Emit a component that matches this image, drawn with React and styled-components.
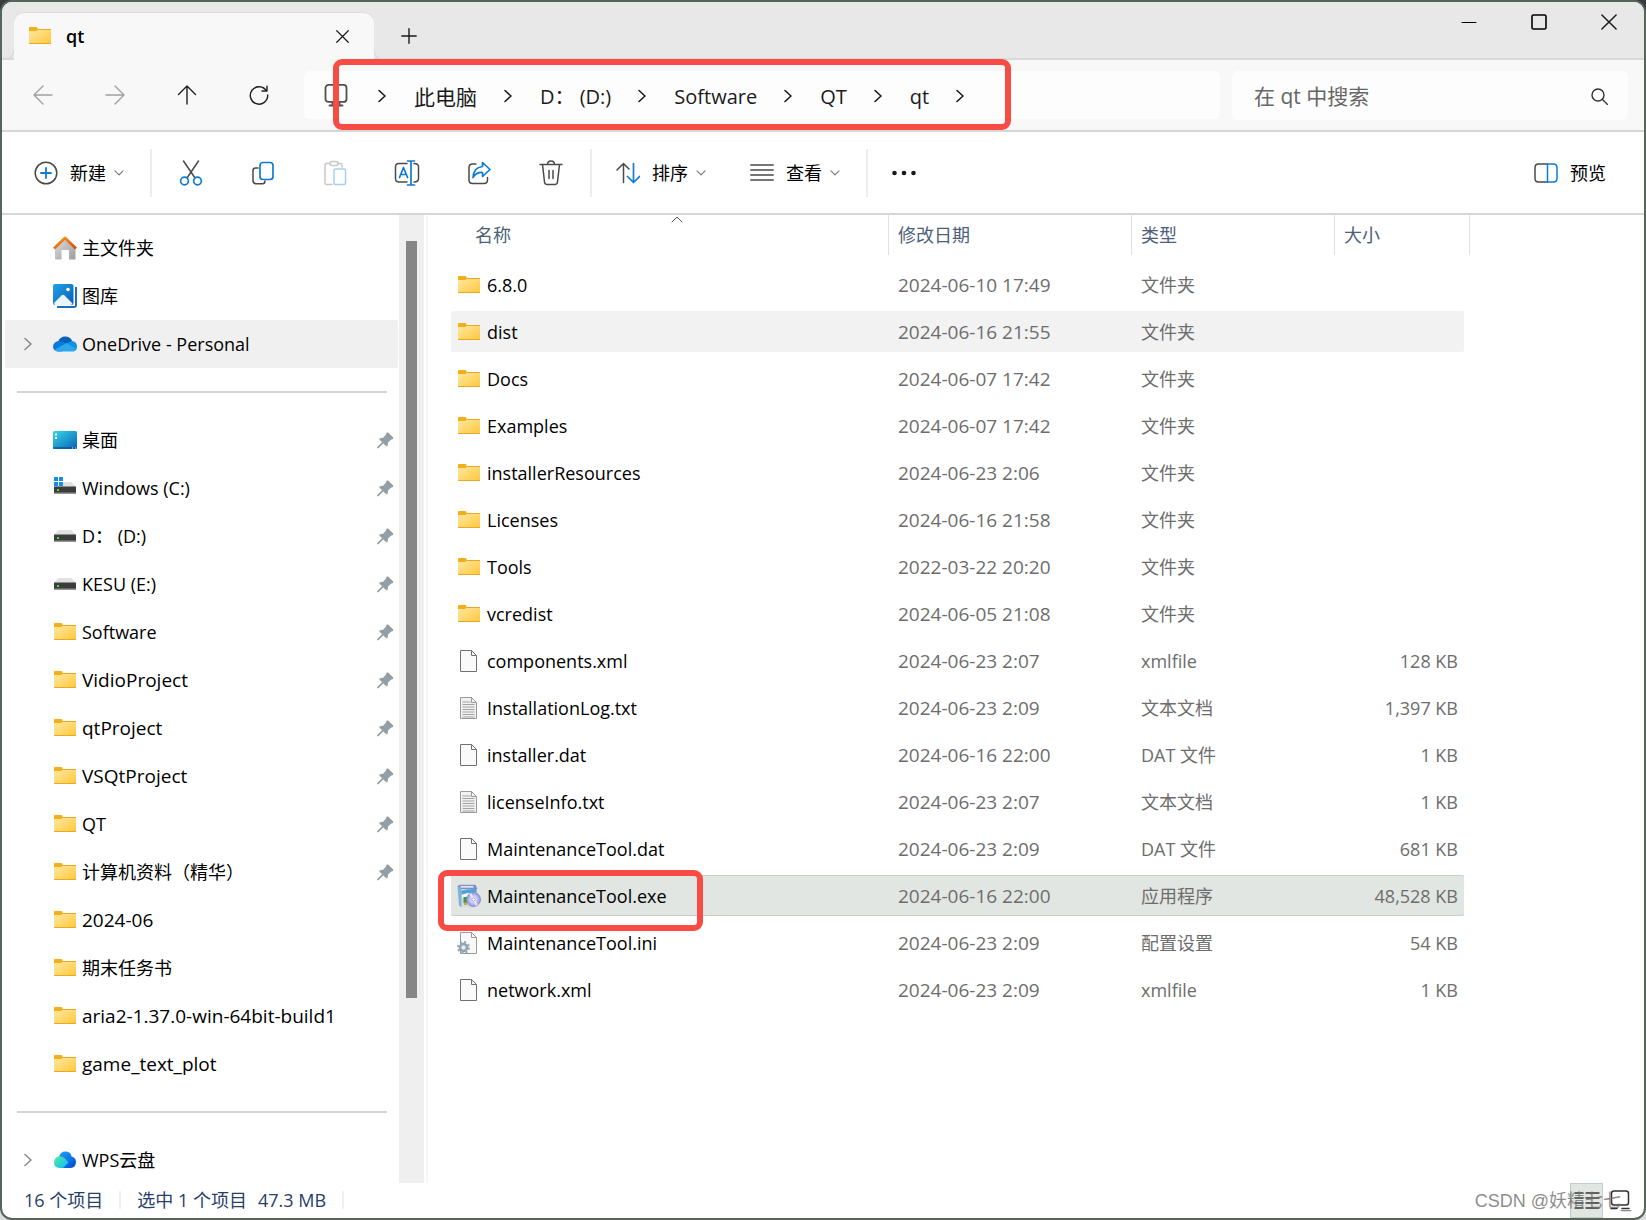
import React from 'react';
import styled, { createGlobalStyle, css } from 'styled-components';

const FONT = '"Open Sans", "Noto Sans CJK SC", sans-serif';
const BLUE = '#0f7bd4';
const INK = '#4a4a4a';

const GlobalStyle = createGlobalStyle`
  * { box-sizing: border-box; }
  html, body { margin: 0; height: 100%; }
  body {
    background: linear-gradient(#3b3b3f 0, #3b3b3f 12px, #dcdcdc 12px);
    font-family: ${FONT};
    font-weight: 400;
    color: #000;
  }
  button, input { font: inherit; color: inherit; }
  svg { display: block; flex: none; }
`;

const Window = styled.div`
  display: flex;
  flex-direction: column;
  height: 100vh;
  overflow: hidden;
  border: 2px solid #56655b;
  border-radius: 12px;
  background: #fff;
  font-size: 18px;
  line-height: 24px;
`;

const PlainButton = styled.button`
  display: flex;
  align-items: center;
  justify-content: center;
  padding: 0;
  border: 0;
  background: transparent;
`;

/* ---------- title bar ---------- */

const TitleBar = styled.header`
  display: flex;
  align-items: flex-end;
  height: 58px;
  flex: none;
  padding-left: 12px;
  background: #e8e8e8;
  box-shadow: inset 0 -2px 0 #d9d9d9;
`;

const Tab = styled.div`
  position: relative;
  display: flex;
  align-items: center;
  width: 360px;
  height: 47px;
  padding: 0 18px 1px 14px;
  border-radius: 10px 10px 0 0;
  background: #f8f8f8;
  box-shadow: 0 -1px 0 #dedede;
  font-weight: 600;
  &::before, &::after {
    content: '';
    position: absolute;
    bottom: 0;
    width: 8px;
    height: 8px;
    border-bottom: 2px solid #d9d9d9;
  }
  &::before { right: 100%; border-right: 1px solid #d9d9d9; border-bottom-right-radius: 8px; }
  &::after { left: 100%; border-left: 1px solid #d9d9d9; border-bottom-left-radius: 8px; }
`;

const TabName = styled.span`
  flex: 1;
  padding-left: 14px;
`;

const TabAction = styled(PlainButton)`
  width: 28px;
  height: 28px;
`;

const NewTab = styled(PlainButton)`
  width: 47px;
  height: 48px;
  margin-left: 11px;
`;

const WindowControls = styled.div`
  display: flex;
  align-self: flex-start;
  margin-left: auto;
`;

const ControlButton = styled(PlainButton)`
  width: 70px;
  height: 40px;
`;

/* ---------- navigation bar ---------- */

const NavBar = styled.nav`
  display: flex;
  align-items: center;
  height: 72px;
  flex: none;
  padding: 0 16px 0 5px;
  background: #f8f8f8;
  border-bottom: 2px solid #d6d6d6;
`;

const NavButton = styled(PlainButton)`
  width: 72px;
  height: 48px;
`;

const AddressBar = styled.div`
  position: relative;
  display: flex;
  align-items: center;
  flex: 1;
  height: 48px;
  margin-left: 9px;
  padding: 2px 0 0 20px;
  border-radius: 6px;
  background: #fdfdfd;
  color: #1b1b1b;
`;

const Crumb = styled(PlainButton)`
  padding: 1px 27px 0 28px;
  font-size: ${(p) => (p.$cjk ? 21 : 20)}px;
  white-space: pre;
`;

const CrumbRoot = styled(PlainButton)`
  margin-right: 30px;
`;

const Highlight = styled.span`
  position: absolute;
  z-index: 2;
  border: 6px solid #f84b46;
  border-radius: 9px;
  pointer-events: none;
`;

const AddressHighlight = styled(Highlight)`
  top: -12px;
  left: 29px;
  width: 678px;
  height: 71px;
`;

const FileHighlight = styled(Highlight)`
  top: -5px;
  left: -13px;
  width: 265px;
  height: 61px;
`;

const SearchBox = styled.label`
  display: flex;
  align-items: center;
  width: 396px;
  height: 49px;
  margin-left: 12px;
  padding: 2px 20px 0 22px;
  border-radius: 6px;
  background: #fdfdfd;
`;

const SearchInput = styled.input`
  flex: 1;
  min-width: 0;
  padding: 0;
  border: 0;
  outline: 0;
  background: transparent;
  font-size: 21px;
  &::placeholder { color: #666; opacity: 1; }
`;

/* ---------- command bar ---------- */

const CommandBar = styled.div`
  display: flex;
  align-items: center;
  height: 83px;
  flex: none;
  padding: 0 38px 0 32px;
  border-bottom: 2px solid #d6d6d6;
`;

const Command = styled(PlainButton)`
  gap: 12px;
  height: 48px;
`;

const IconCommand = styled(PlainButton)`
  width: 72px;
  height: 48px;
`;

const Caret = styled.span`
  display: flex;
  margin-left: -4px;
`;

const Separator = styled.span`
  width: 2px;
  height: 48px;
  margin: 0 ${(p) => p.$after || 0}px 0 ${(p) => p.$before}px;
  background: #ededed;
`;

const Spacer = styled.span`
  flex: ${(p) => (p.$width ? 'none' : 1)};
  width: ${(p) => p.$width || 0}px;
`;

/* ---------- body ---------- */

const Body = styled.div`
  display: flex;
  flex: 1;
  min-height: 0;
`;

const Sidebar = styled.aside`
  width: 397px;
  flex: none;
  padding: 9px 1px 0 3px;
  overflow: hidden;
`;

const SideList = styled.ul`
  margin: 0;
  padding: 0;
  list-style: none;
`;

const SideLink = styled.a`
  display: flex;
  align-items: center;
  height: 48px;
  padding-right: 4px;
  border-radius: 2px;
  background: ${(p) => (p.$active ? '#f0f0f0' : 'transparent')};
  color: #000;
  font-size: ${(p) => (p.$wide ? 19 : 18)}px;
  text-decoration: none;
  white-space: pre;
`;

const Expander = styled.span`
  display: flex;
  justify-content: center;
  width: 48px;
  padding-right: 2px;
`;

const SideName = styled.span`
  flex: 1;
  padding-left: 5px;
`;

const SideRule = styled.hr`
  height: 2px;
  margin: 23px 11px 23px 12px;
  border: 0;
  background: #d5d5d5;
`;

const ScrollTrack = styled.div`
  width: 25px;
  flex: none;
  padding: 26px 7px 185px;
  background: #efefef;
`;

const ScrollThumb = styled.div`
  height: 100%;
  background: #868686;
`;

const Main = styled.main`
  flex: 1;
  min-width: 0;
  margin-left: 2px;
  padding-left: 23px;
  border-left: 2px solid #f6f6f6;
  overflow: hidden;
`;

const FileTable = styled.table`
  table-layout: fixed;
  width: 1013px;
  margin-top: -6px;
  border-collapse: separate;
  border-spacing: 0 6px;
`;

const Th = styled.th`
  position: relative;
  width: ${(p) => p.$width}px;
  height: 43px;
  padding: 0;
  vertical-align: top;
  text-align: left;
  font-weight: 400;
  color: #4c607a;
`;

const HeadCell = styled.div`
  display: flex;
  align-items: center;
  height: 40px;
  margin-right: ${(p) => (p.$last ? -6 : 0)}px;
  padding-left: ${(p) => (p.$first ? 24 : 9)}px;
  border-right: 1px solid #e0e0e0;
`;

const SortMark = styled.span`
  position: absolute;
  top: 1px;
  left: calc(50% + 1px);
`;

const Row = styled.tr`
  & > td {
    background: ${(p) => (p.$selected ? '#e2e6e2' : p.$hover ? '#f2f2f2' : 'transparent')};
    ${(p) => p.$selected && css`
      box-shadow: inset 0 1px 0 #c8d0cc, inset 0 -1px 0 #c8d0cc;
    `}
  }
  & > td:first-child { border-radius: 2px 0 0 2px; }
  & > td:last-child { border-radius: 0 2px 2px 0; }
`;

const Td = styled.td`
  position: relative;
  height: 41px;
  padding: 0 6px 0 9px;
  color: #6d6d6d;
  font-size: ${(p) => (p.$wide ? 19 : 18)}px;
  text-align: ${(p) => (p.$right ? 'right' : 'left')};
  white-space: nowrap;
`;

const NameTd = styled(Td)`
  padding-left: 6px;
  color: #000;
`;

const NameCell = styled.div`
  display: flex;
  align-items: center;
  gap: 6px;
`;

/* ---------- status bar ---------- */

const StatusBar = styled.footer`
  position: relative;
  display: flex;
  align-items: center;
  height: 35px;
  flex: none;
  padding: 0 0 1px 22px;
  color: #27406b;
`;

const StatusRule = styled.span`
  width: 2px;
  height: 18px;
  margin: 0 16px;
  background: #f0f0f0;
`;

const StatusSize = styled.span`
  margin-left: 11px;
`;

const ViewButton = styled(PlainButton)`
  width: 33px;
  height: 35px;
  border: 1px solid ${(p) => (p.$active ? '#c5cdc8' : 'transparent')};
  background: ${(p) => (p.$active ? '#e2e6e2' : 'transparent')};
`;

const ViewButtons = styled.div`
  display: flex;
  margin-left: auto;
  padding-right: 8px;
`;

const Watermark = styled.span`
  position: absolute;
  right: 13px;
  top: 6px;
  color: rgba(110, 110, 110, 0.8);
  font-family: "Liberation Sans", "Noto Sans CJK SC", sans-serif;
  font-size: 18px;
  pointer-events: none;
`;

/* ---------- icons ---------- */

const Line = ({ w = 24, h = 24, box, color = INK, sw = 1.5, children }) => (
  <svg width={w} height={h} viewBox={box || `0 0 ${w} ${h}`} fill="none" stroke={color}
    strokeWidth={sw} strokeLinecap="round" strokeLinejoin="round" aria-hidden="true">
    {children}
  </svg>
);

const Defs = () => (
  <svg width="0" height="0" style={{ position: 'absolute' }} aria-hidden="true">
    <defs>
      <linearGradient id="folder" x1="0" y1="0" x2="1" y2="1">
        <stop offset="0" stopColor="#ffe9a6" /><stop offset="1" stopColor="#ffc83a" />
      </linearGradient>
      <linearGradient id="roof" x1="0" y1="0" x2="1" y2="1">
        <stop offset="0" stopColor="#f59a1d" /><stop offset="1" stopColor="#d8480f" />
      </linearGradient>
      <linearGradient id="wall" x1="0" y1="0" x2="1" y2="1">
        <stop offset="0" stopColor="#dedede" /><stop offset="1" stopColor="#9c9c9c" />
      </linearGradient>
      <linearGradient id="sky" x1="0" y1="0" x2="1" y2="1">
        <stop offset="0" stopColor="#1fa2e8" /><stop offset="1" stopColor="#0a5fb5" />
      </linearGradient>
      <linearGradient id="desk" x1="0" y1="0" x2="1" y2="1">
        <stop offset="0" stopColor="#36d6e6" /><stop offset="1" stopColor="#0b63ba" />
      </linearGradient>
      <linearGradient id="wpsL" x1="0" y1="0" x2="1" y2="1">
        <stop offset="0" stopColor="#4cf0a0" /><stop offset="1" stopColor="#12b7f7" />
      </linearGradient>
      <linearGradient id="wpsR" x1="0" y1="0" x2="1" y2="1">
        <stop offset="0" stopColor="#1ea6ff" /><stop offset="1" stopColor="#0446d2" />
      </linearGradient>
      <radialGradient id="disc">
        <stop offset="0" stopColor="#fff" /><stop offset="0.5" stopColor="#c9c8f6" /><stop offset="1" stopColor="#8f93dc" />
      </radialGradient>
    </defs>
  </svg>
);

const Pic = ({ children }) => (
  <svg width="24" height="24" viewBox="0 0 24 24" aria-hidden="true">{children}</svg>
);

const Folder = () => (
  <Pic>
    <path d="M1 4q0-1 1-1h6q1 0 1.500 1L10 5.500 9 8H1z" fill="#f5ae18" />
    <path d="M1 7h7.500L10 5h12q1 0 1 1v13.500H1z" fill="url(#folder)" />
    <path d="M1 19.500h22M9.500 5.500H23" stroke="#eaa825" strokeWidth="1" />
  </Pic>
);

const Home = () => (
  <Pic>
    <path d="M2 11L12 2l10.500 9v12.500h-6.500v-9.500H8.500v9.500H3Q2 23.500 2 22.500z" fill="url(#wall)" />
    <path d="M1 12.500L12 2l11 10.500" fill="none" stroke="url(#roof)" strokeWidth="2.800" strokeLinejoin="round" />
  </Pic>
);

const Gallery = () => (
  <Pic>
    <path d="M23 3v18q0 2-2 2H4" fill="none" stroke="#1d6fbd" strokeWidth="2" />
    <rect x="0" y="0" width="20.500" height="21" rx="2" fill="url(#sky)" />
    <path d="M1 19L8.500 11.500q1.500-1.500 3 0L19.500 19.500 18 21H2z" fill="#e9f4fd" />
    <circle cx="15" cy="5.500" r="1.800" fill="#fff" />
  </Pic>
);

const OneDrive = () => (
  <Pic>
    <path d="M5 10q2-6 8-5.500 5 .5 6.500 5.500l-6 4z" fill="#0a61b9" />
    <path d="M4.500 19.500Q0 18.500 0 14.500 .5 9.500 6 9q4 0 7 2.500L9 19.500z" fill="#0d79d6" />
    <path d="M13 11.500l6-2.500q5 .5 5 5.500 0 4.500-4 5z" fill="#1590e0" />
    <path d="M2 17.500L13.500 11l9.500 6q-1 2.500-4 2.500H5.500Q3 19.500 2 17.500z" fill="#2aa7ee" />
  </Pic>
);

const Desktop = () => (
  <Pic>
    <rect x="0" y="3" width="24" height="18" rx="1.500" fill="url(#desk)" />
    <path d="M2 5.500h2v2H2zM2 9h2v2H2z" fill="#fff" />
    <path d="M0 20h24" stroke="#0a4a86" strokeWidth="1.200" />
    <path d="M19 20h1M22 20h1" stroke="#fff" />
  </Pic>
);

const Drive = ({ system }) => (
  <Pic>
    <path d={system ? 'M10 6h8.500l4.500 5H1V9h9z' : 'M5.500 6h13L23 11H1z'} fill="#dfe1e3" />
    <rect x="1" y="10.500" width="22" height="7" fill="#3c3c3c" />
    <path d="M1 17h22" stroke="#8f8f8f" />
    <rect x="4" y="13" width="2" height="2" fill="#3be03b" />
    {system && <path d="M1 1h4v4H1zM6 1h4v4H6zM1 6h4v4H1zM6 6h4v4H6z" fill="#168fe0" />}
  </Pic>
);

const WpsCloud = () => (
  <Pic>
    <path d="M6 9q1.500-6 7-5.500Q18 4 18.500 8.500 23 9.500 23 14q0 5.500-5.500 6H9z" fill="url(#wpsR)" />
    <path d="M6 8.500q4-.5 6.500 2.500l3 3.500L10 20H6.500Q1 19.500 1 14.500 1.500 9 6 8.500z" fill="url(#wpsL)" />
  </Pic>
);

const Page = ({ lines }) => (
  <Pic>
    <path d="M3.500 1.500h11l5 5v16h-16z" fill={lines ? '#f1f1f1' : '#fafafa'} stroke={lines ? '#9a9a9a' : '#707070'} />
    <path d="M14.500 1.500v5h5" fill="none" stroke={lines ? '#9a9a9a' : '#707070'} />
    {lines && <path d="M5.500 6h8M5.500 8.500h12M5.500 11h12M5.500 13.500h12M5.500 16h12M5.500 18.500h12M5.500 21h12" stroke="#a3a3a3" />}
  </Pic>
);

const Ini = () => (
  <Pic>
    <path d="M3.500 1.500h11l5 5v16h-16z" fill="#f8f8f8" stroke="#9a9a9a" />
    <path d="M14.500 1.500v5h5" fill="none" stroke="#9a9a9a" />
    <circle cx="6.500" cy="16.500" r="5.500" fill="none" stroke="#9aa9b5" strokeWidth="2" strokeDasharray="2.200 2.100" />
    <circle cx="6.500" cy="16.500" r="3.500" fill="#e6ebef" stroke="#8fa2b0" strokeWidth="2.500" />
  </Pic>
);

const Installer = () => (
  <Pic>
    <path d="M4 4h16v18l-5 1.500L3 23z" fill="#d5dbe0" />
    <path d="M.5 2l4 3.500v17.500L2 21.500z" fill="#7fb2d6" />
    <path d="M.5 2L3 .8h15.500L20.500 5H4z" fill="#7c8cc4" />
    <path d="M3.500 2.800h13" stroke="#dbe6f5" strokeWidth="1.800" />
    <path d="M4.500 6.500q7-2 15-1.500v3.500q-8-.5-15 2z" fill="#4ba3dc" />
    <path d="M5 11q5-1.800 8-1.800v3l-8 1.500z" fill="#f7fafc" />
    <path d="M6.500 13h3.500v6H6.500z" fill="#2f9e3f" />
    <path d="M7 18.500h3v2.500H7z" fill="#d9a13a" />
    <circle cx="16.500" cy="15.500" r="7" fill="url(#disc)" stroke="#8386c8" strokeWidth=".8" />
    <path d="M16.500 15.500L12 10.500l2.500-1.500zM16.500 15.500l4.500 5-2.500 1.500z" fill="#fff" opacity=".7" />
    <circle cx="16.500" cy="15.500" r="1.600" fill="#fff" stroke="#8a8cc8" strokeWidth=".7" />
  </Pic>
);

const PinIcon = () => (
  <svg width="17" height="17" viewBox="0 0 17 17" aria-hidden="true">
    <path d="M9.500 .8q1-.8 1.900 0l4.600 4.400q.7.900-.2 1.700l-2.300 1-2.400 2.600-.6 3.300q-.5 1-1.400.3L6.300 11.600 1.600 16 .6 16.400 0 15.800l.5-1L5.100 10.300 2.400 7.600q-.5-.9.4-1.300l3.300-.6 2.400-2.500z" fill="#939ea5" />
  </svg>
);

const CrossIcon = ({ size = 14 }) => (
  <Line w={size} h={size} box="0 0 14 14" color="#1a1a1a" sw={1.3}><path d="M.8 .8l12.400 12.400M13.200 .8L.8 13.200" /></Line>
);

const ChevronRight = ({ color = '#1a1a1a' }) => (
  <Line w={8} h={14} color={color} sw={1.6}><path d="M1 1.500l6 5.500-6 5.500" /></Line>
);

const CaretDown = () => (
  <Caret><Line w={10} h={6} color="#777" sw={1.1}><path d="M1 .8l4 4 4-4" /></Line></Caret>
);

const fileIcons = {
  folder: <Folder />, page: <Page />, text: <Page lines />, ini: <Ini />, exe: <Installer />,
};

/* ---------- data ---------- */

const places = [
  { name: '主文件夹', icon: <Home /> },
  { name: '图库', icon: <Gallery /> },
  { name: 'OneDrive - Personal', icon: <OneDrive />, expandable: true, active: true },
];

const pinned = [
  { name: '桌面', icon: <Desktop />, pin: true },
  { name: 'Windows (C:)', icon: <Drive system />, pin: true },
  { name: 'D： (D:)', icon: <Drive />, pin: true },
  { name: 'KESU (E:)', icon: <Drive />, pin: true },
  { name: 'Software', icon: <Folder />, pin: true },
  { name: 'VidioProject', icon: <Folder />, pin: true, wide: true },
  { name: 'qtProject', icon: <Folder />, pin: true, wide: true },
  { name: 'VSQtProject', icon: <Folder />, pin: true, wide: true },
  { name: 'QT', icon: <Folder />, pin: true },
  { name: '计算机资料（精华）', icon: <Folder />, pin: true },
  { name: '2024-06', icon: <Folder />, wide: true },
  { name: '期末任务书', icon: <Folder /> },
  { name: 'aria2-1.37.0-win-64bit-build1', icon: <Folder />, wide: true },
  { name: 'game_text_plot', icon: <Folder />, wide: true },
];

const clouds = [{ name: 'WPS云盘', icon: <WpsCloud />, expandable: true }];

const crumbs = ['此电脑', 'D： (D:)', 'Software', 'QT', 'qt'];

const files = [
  ['folder', '6.8.0', '2024-06-10 17:49', '文件夹', ''],
  ['folder', 'dist', '2024-06-16 21:55', '文件夹', ''],
  ['folder', 'Docs', '2024-06-07 17:42', '文件夹', ''],
  ['folder', 'Examples', '2024-06-07 17:42', '文件夹', ''],
  ['folder', 'installerResources', '2024-06-23 2:06', '文件夹', ''],
  ['folder', 'Licenses', '2024-06-16 21:58', '文件夹', ''],
  ['folder', 'Tools', '2022-03-22 20:20', '文件夹', ''],
  ['folder', 'vcredist', '2024-06-05 21:08', '文件夹', ''],
  ['page', 'components.xml', '2024-06-23 2:07', 'xmlfile', '128 KB'],
  ['text', 'InstallationLog.txt', '2024-06-23 2:09', '文本文档', '1,397 KB'],
  ['page', 'installer.dat', '2024-06-16 22:00', 'DAT 文件', '1 KB'],
  ['text', 'licenseInfo.txt', '2024-06-23 2:07', '文本文档', '1 KB'],
  ['page', 'MaintenanceTool.dat', '2024-06-23 2:09', 'DAT 文件', '681 KB'],
  ['exe', 'MaintenanceTool.exe', '2024-06-16 22:00', '应用程序', '48,528 KB'],
  ['ini', 'MaintenanceTool.ini', '2024-06-23 2:09', '配置设置', '54 KB'],
  ['page', 'network.xml', '2024-06-23 2:09', 'xmlfile', '1 KB'],
];

const SideItems = ({ items }) => (
  <SideList>
    {items.map((item) => (
      <li key={item.name}>
        <SideLink href="#" $active={item.active} $wide={item.wide}>
          <Expander>{item.expandable && <ChevronRight color="#8a8a8a" />}</Expander>
          {item.icon}
          <SideName>{item.name}</SideName>
          {item.pin && <PinIcon />}
        </SideLink>
      </li>
    ))}
  </SideList>
);

export default function App() {
  return (
    <Window>
      <GlobalStyle />
      <Defs />
      <TitleBar>
        <Tab>
          <Folder />
          <TabName>qt</TabName>
          <TabAction aria-label="关闭标签页"><CrossIcon size={13} /></TabAction>
        </Tab>
        <NewTab aria-label="新标签页">
          <Line w={16} h={16} color="#1a1a1a" sw={1.4}><path d="M8 .8v14.400M.8 8h14.400" /></Line>
        </NewTab>
        <WindowControls>
          <ControlButton aria-label="最小化"><Line w={16} h={16} color="#000" sw={1}><path d="M1 8.500h14" /></Line></ControlButton>
          <ControlButton aria-label="最大化"><Line w={16} h={16} color="#000" sw={1.6}><rect x="1" y="1" width="14" height="14" rx="1.500" /></Line></ControlButton>
          <ControlButton aria-label="关闭"><CrossIcon size={16} /></ControlButton>
        </WindowControls>
      </TitleBar>

      <NavBar>
        <NavButton aria-label="后退"><Line w={20} h={20} color="#a0a0a0" sw={1.4}><path d="M19 10H1M10 1L1 10l9 9" /></Line></NavButton>
        <NavButton aria-label="前进"><Line w={20} h={20} color="#a0a0a0" sw={1.4}><path d="M1 10h18M10 1l9 9-9 9" /></Line></NavButton>
        <NavButton aria-label="向上"><Line w={20} h={20} color="#1f1f1f" sw={1.4}><path d="M10 19V1M1.500 9.500L10 1l8.500 8.500" /></Line></NavButton>
        <NavButton aria-label="刷新"><Line w={20} h={20} color="#1f1f1f" sw={1.4}><path d="M17.500 6A8.700 8.700 0 1 0 18.700 10M18 1.200V6h-5" /></Line></NavButton>
        <AddressBar>
          <CrumbRoot aria-label="位置">
            <Line w={24} h={24} color="#4f4f4f" sw={1.8}>
              <rect x="1.500" y=".9" width="21" height="17" rx="3" /><path d="M8.500 18v3.500M15.500 18v3.500M5.500 21.500h13" />
            </Line>
          </CrumbRoot>
          <ChevronRight />
          {crumbs.map((c) => (
            <React.Fragment key={c}>
              <Crumb $cjk={c === '此电脑'}>{c}</Crumb>
              <ChevronRight />
            </React.Fragment>
          ))}
          <AddressHighlight />
        </AddressBar>
        <SearchBox>
          <SearchInput type="text" aria-label="在 qt 中搜索" placeholder="在 qt 中搜索" />
          <Line w={17} h={17} color="#333" sw={1.4}><circle cx="7" cy="7" r="6" /><path d="M11.500 11.500l5 5" /></Line>
        </SearchBox>
      </NavBar>

      <CommandBar>
        <Command>
          <Line w={24} h={24}><circle cx="12" cy="12" r="10.800" /><path d="M12 7v10M7 12h10" stroke={BLUE} strokeWidth="1.800" /></Line>
          新建<CaretDown />
        </Command>
        <Separator $before={26} $after={3} />
        <IconCommand aria-label="剪切">
          <Line w={24} h={26}><path d="M4.500 1l11.500 17M19.500 1L8 18" /><g stroke={BLUE} strokeWidth="1.700"><circle cx="5.500" cy="21" r="3.900" /><circle cx="18.500" cy="21" r="3.900" /></g></Line>
        </IconCommand>
        <IconCommand aria-label="复制">
          <Line w={24} h={24}><path d="M7 7H4.500Q2 7 2 9.500v10Q2 22.800 5.500 22.800h6Q14 22.800 14 20" /><rect x="9" y="1.500" width="13" height="17" rx="3" stroke={BLUE} strokeWidth="1.700" /></Line>
        </IconCommand>
        <IconCommand aria-label="粘贴">
          <Line w={24} h={26} color="#c8c8c8"><path d="M9 24.500H3.500Q2 24.500 2 23V5q0-1.500 1.500-1.500H7M14.500 3.500h3q1.500 0 1.500 1.500v2M7 3.500q0-2 2-2h4q2 0 2 2t-2 2H9q-2 0-2-2z" /><rect x="11" y="9" width="11.500" height="15.500" rx="1.500" stroke="#a6cff0" /></Line>
        </IconCommand>
        <IconCommand aria-label="重命名">
          <Line w={26} h={26}><path d="M13 3.500H5q-3.500 0-3.500 3.500v11.500q0 3.500 3.500 3.500h8M20 3.500q4.500 0 4.500 3.500v11.500q0 3.500-4.500 3.500" /><path d="M5.500 17.500L9.500 7.500l4 10M7 14.500h5M17 1v24M13.500 1h7M13.500 25h7" stroke={BLUE} strokeWidth="1.700" /></Line>
        </IconCommand>
        <IconCommand aria-label="共享">
          <Line w={24} h={24}><path d="M9 3H5.500Q2 3 2 6.500v12.500Q2 22.500 5.500 22.500H17q3.500 0 3.500-3.500v-2.500" /><path d="M15.500 1.500L23 8.500l-7.500 7v-4Q9.500 11 6 16.500 6.500 6.500 15.500 5.500z" stroke={BLUE} strokeWidth="1.700" /></Line>
        </IconCommand>
        <IconCommand aria-label="删除">
          <Line w={24} h={26}><path d="M1 4.500h22M3.500 4.500l2 17.500q.3 2.500 2.800 2.500h7.400q2.500 0 2.800-2.500l2-17.500M8.500 4.500q0-3.500 3.500-3.500t3.500 3.500M10 10.500v8M14 10.500v8" /></Line>
        </IconCommand>
        <Separator $before={3} $after={24} />
        <Command>
          <Line w={24} h={24}><path d="M7.500 21.500V2.500M1 9l6.500-6.500L13 8" /><path d="M17.500 2.500v19M11.500 15.500l6 6 6-6" stroke={BLUE} strokeWidth="1.700" /></Line>
          排序<CaretDown />
        </Command>
        <Spacer $width={44} />
        <Command>
          <Line w={24} h={24}><path d="M.8 4h22.400M.8 9h22.400M.8 14h22.400M.8 19h22.400" /></Line>
          查看<CaretDown />
        </Command>
        <Separator $before={26} $after={24} />
        <Command aria-label="更多">
          <Line w={24} h={6} color="none"><g fill="#1a1a1a"><circle cx="2.500" cy="3" r="2.300" /><circle cx="12" cy="3" r="2.300" /><circle cx="21.500" cy="3" r="2.300" /></g></Line>
        </Command>
        <Spacer />
        <Command>
          <Line w={24} h={20}><path d="M13.500 1H4.500Q1 1 1 4.500v11Q1 19 4.500 19h9" /><path d="M13.500 1h6Q23 1 23 4.500v11Q23 19 19.500 19h-6z" stroke={BLUE} /></Line>
          预览
        </Command>
      </CommandBar>

      <Body>
        <Sidebar>
          <SideItems items={places} />
          <SideRule />
          <SideItems items={pinned} />
          <SideRule />
          <SideItems items={clouds} />
        </Sidebar>
        <ScrollTrack><ScrollThumb /></ScrollTrack>
        <Main>
          <FileTable>
            <thead>
              <tr>
                <Th $width={438}>
                  <HeadCell $first>名称</HeadCell>
                  <SortMark><Line w={12} h={7} color="#555" sw={1}><path d="M1 6l5-5 5 5" /></Line></SortMark>
                </Th>
                <Th $width={243}><HeadCell>修改日期</HeadCell></Th>
                <Th $width={203}><HeadCell>类型</HeadCell></Th>
                <Th $width={129}><HeadCell $last>大小</HeadCell></Th>
              </tr>
            </thead>
            <tbody>
              {files.map(([kind, name, date, type, size]) => (
                <Row key={name} $selected={kind === 'exe'} $hover={name === 'dist'}>
                  <NameTd>
                    <NameCell>{fileIcons[kind]}{name}</NameCell>
                    {kind === 'exe' && <FileHighlight />}
                  </NameTd>
                  <Td $wide>{date}</Td>
                  <Td>{type}</Td>
                  <Td $right>{size}</Td>
                </Row>
              ))}
            </tbody>
          </FileTable>
        </Main>
      </Body>

      <StatusBar>
        <span>16 个项目</span>
        <StatusRule />
        <span>选中 1 个项目</span>
        <StatusSize>47.3 MB</StatusSize>
        <StatusRule />
        <ViewButtons>
          <ViewButton $active aria-label="详细信息">
            <Line w={26} h={20} color="#333" sw={1.3}><path d="M1 3h8M12 3h13M1 8h8M12 8h13M1 13h8M12 13h13M1 18h8M12 18h13" /></Line>
          </ViewButton>
          <ViewButton aria-label="大缩略图">
            <Line w={20} h={20} color="#333" sw={1.5}><rect x="1.500" y="1" width="17" height="14" rx="2.500" /><path d="M1 18.500h6M12 18.500h7" /></Line>
          </ViewButton>
        </ViewButtons>
        <Watermark>CSDN @妖精七七_</Watermark>
      </StatusBar>
    </Window>
  );
}
